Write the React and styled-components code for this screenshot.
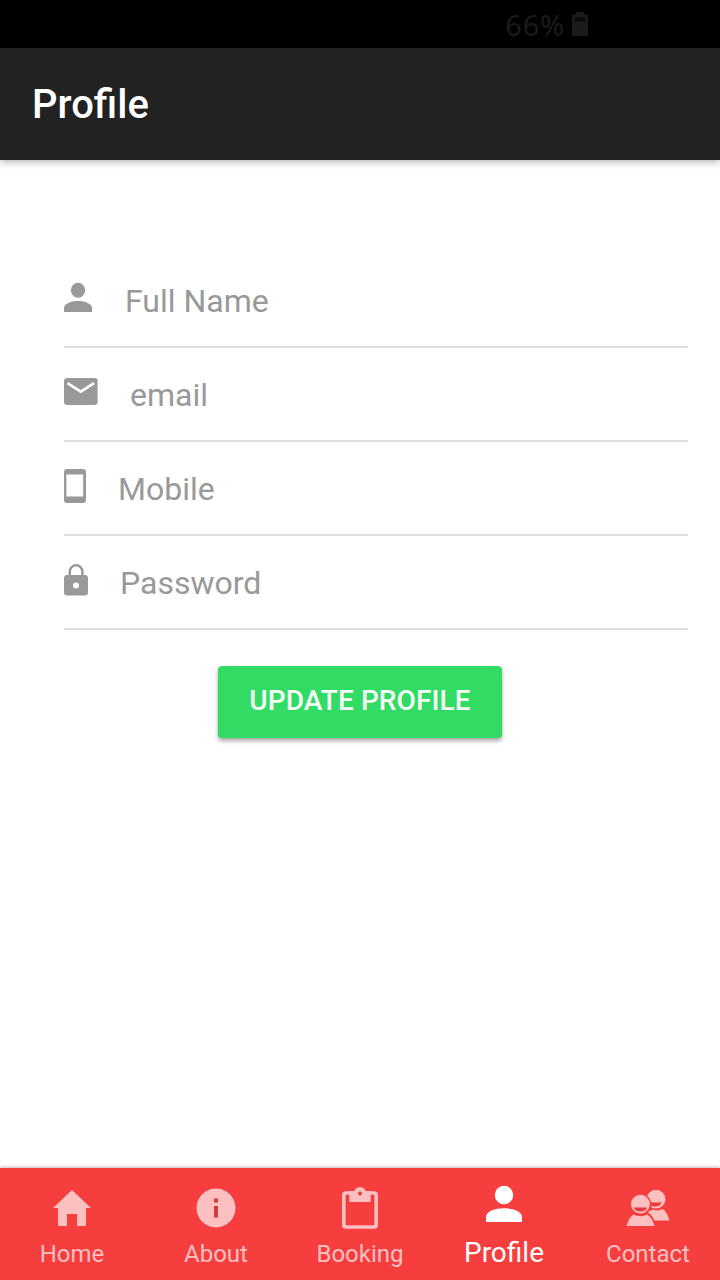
import React from 'react';
import styled, { createGlobalStyle } from 'styled-components'


const PersonIcon = ({ width, height }) => (
    <Svg width={width} height={height} viewBox="0 0 36 36" preserveAspectRatio="none">
        <circle cx="18" cy="9" r="9.2" />
        <path d="M0 36v-5C0 25.500 9 22.200 18 22.200s18 3.300 18 8.800v5z" />
    </Svg>
)

const MailIcon = () => (
    <Svg width="34" height="27" viewBox="0 0 34 27">
        <rect width="33.6" height="27" rx="3" />
        <path d="M3.5 5.2L16.8 13.6 30 5.2" fill="none" stroke="#fff" strokeWidth="2.6" />
    </Svg>
)

const PhoneIcon = () => (
    <Svg width="22" height="34" viewBox="0 0 22 34">
        <path fillRule="evenodd" d="M3 0h16a3 3 0 0 1 3 3v28a3 3 0 0 1-3 3H3a3 3 0 0 1-3-3V3a3 3 0 0 1 3-3zM2.4 5.6v22h16.8v-22z" />
    </Svg>
)

const LockIcon = () => (
    <Svg width="24" height="32" viewBox="0 0 24 32">
        <path d="M5.8 12V7.5a6.3 6.3 0 0 1 12.6 0V12" fill="none" stroke="currentColor" strokeWidth="2.4" />
        <path fillRule="evenodd" d="M3 11h18a3 3 0 0 1 3 3v14.4a3 3 0 0 1-3 3H3a3 3 0 0 1-3-3V14a3 3 0 0 1 3-3zm9 7.4a3 3 0 1 0 0 6 3 3 0 0 0 0-6z" />
    </Svg>
)

const HomeIcon = () => (
    <Svg width="38" height="36" viewBox="0 0 38 36">
        <path d="M19 0l19 18h-5v18h-9V24H14v12H5V18H0z" />
    </Svg>
)

const InfoIcon = () => (
    <Svg width="40" height="40" viewBox="0 0 40 40">
        <circle cx="20" cy="20" r="19.5" />
        <path d="M18 10.500h4v4h-4zM18 18h4v11.500h-4z" fill="#d23c40" />
    </Svg>
)

const ClipboardIcon = () => (
    <Svg width="36" height="42" viewBox="0 0 36 42">
        <rect x="1.8" y="6" width="32.400" height="34" rx="2" fill="none" stroke="currentColor" strokeWidth="3.600" />
        <circle cx="18" cy="6" r="6" />
        <rect x="7.300" y="4.200" width="21.400" height="10.800" />
        <circle cx="18" cy="6.400" r="2" fill="#e8393b" />
    </Svg>
)

const PeopleIcon = () => (
    <Svg width="42" height="38" viewBox="0 0 42 38">
        <path d="M21 31.500V23l5-2.500c3 1.500 6.500 1.300 9.300-.5C39 22 41 26 42.500 31.500z" />
        <circle cx="29" cy="10.2" r="9.4" />
        <path d="M21 13.600h13.800c-1 2.600-3.600 4-6.800 4-3 0-5.500-1.400-7-4z" fill="#e8393b" />
        <circle cx="13.400" cy="15.200" r="10.800" fill="#f73e3e" />
        <path d="M10 23h9.500c5 1.500 7.700 6.500 9.500 14.500H10z" fill="#f73e3e" />
        <circle cx="13.400" cy="15.200" r="9.400" />
        <path d="M6.600 18.400h13.600c-1 2.600-3.600 4-6.800 4s-5.800-1.400-6.800-4z" fill="#e8393b" />
        <path d="M-.3 37c1.400-5 3.400-9.400 6.900-11.400 4 2.300 9.600 2.300 13.600 0C23.700 27.600 26 32 27.500 37z" />
    </Svg>
)


const fields = [
    { label: "Full Name", icon: <PersonIcon width="28" height="29" />, top: 29, gap: 33 },
    { label: "email", icon: <MailIcon />, top: 30, gap: 32 },
    { label: "Mobile", icon: <PhoneIcon />, top: 27, gap: 32 },
    { label: "Password", icon: <LockIcon />, top: 28, gap: 32 },
]

const tabs = [
    { label: "Home", icon: <HomeIcon /> },
    { label: "About", icon: <InfoIcon /> },
    { label: "Booking", icon: <ClipboardIcon /> },
    { label: "Profile", icon: <PersonIcon width="36" height="36" />, active: true },
    { label: "Contact", icon: <PeopleIcon /> },
]


class App extends React.Component {
    render() {
        return (
            <>
                <GlobalStyle />
                <Screen>
                    <StatusBar>
                        <span>66%</span>
                        <Battery width="16" height="24" viewBox="0 0 16 24">
                            <path d="M4 0h8v2.500h4V24H0V2.500h4z" />
                            <path d="M3 5.500h10v4H3z" fill="#0b0b0b" />
                        </Battery>
                    </StatusBar>
                    <Header>
                        <H1>Profile</H1>
                    </Header>
                    <Form>
                        {fields.map(field => (
                            <Field key={field.label}>
                                <FieldIcon $top={field.top}>{field.icon}</FieldIcon>
                                <Label $gap={field.gap}>{field.label}</Label>
                            </Field>
                        ))}
                        <Button type="button">Update Profile</Button>
                    </Form>
                    <TabBar>
                        {tabs.map(tab => (
                            <Tab key={tab.label} $active={tab.active}>
                                <TabIcon $active={tab.active}>{tab.icon}</TabIcon>
                                <TabLabel $active={tab.active}>{tab.label}</TabLabel>
                            </Tab>
                        ))}
                    </TabBar>
                </Screen>
            </>
        )
    }
}


export default App

const GlobalStyle = createGlobalStyle`
    * {
        box-sizing: border-box;
    }
    body {
        margin: 0;
        background-color: #fff;
        font-family: Roboto, "Liberation Sans", sans-serif;
    }
`

const Screen = styled.div`
    width: 720px;
    height: 1280px;
    display: flex;
    flex-direction: column;
    overflow: hidden;
`

const Svg = styled.svg`
    display: block;
    flex: none;
    fill: currentColor;
    overflow: visible;
`

const StatusBar = styled.div`
    height: 48px;
    flex: none;
    display: flex;
    align-items: center;
    justify-content: flex-end;
    gap: 7px;
    padding: 2px 132px 0 0;
    background-color: #000;
    color: #1b1b1b;
    font-family: "Noto Sans", sans-serif;
    font-size: 29px;
    letter-spacing: 0.8px;
    line-height: 40px;
`

const Battery = styled(Svg)`
    margin-bottom: 2px;
`

const Header = styled.header`
    height: 112px;
    flex: none;
    display: flex;
    align-items: center;
    padding: 2px 0 0 32px;
    background-color: #222;
    box-shadow: 0 2px 8px rgba(0, 0, 0, 0.3);
`

const H1 = styled.h1`
    margin: 0;
    color: #fff;
    font-size: 40px;
    font-weight: 500;
    line-height: 48px;
`

const Form = styled.form`
    flex: 1;
    display: flex;
    flex-direction: column;
    padding: 94px 32px 0 64px;
`

const Field = styled.div`
    height: 94px;
    display: flex;
    align-items: flex-start;
    border-bottom: 2px solid #dedede;
    color: #999;
`

const FieldIcon = styled.div`
    padding-top: ${props => props.$top}px;
`

const Label = styled.label`
    margin: 27px 0 0 ${props => props.$gap}px;
    font-size: 32px;
    line-height: 40px;
`

const Button = styled.button`
    width: 284px;
    height: 72px;
    margin: 36px 0 0 154px;
    padding: 0 0 3px;
    border: none;
    border-radius: 4px;
    background-color: #32db64;
    box-shadow: 0 3px 4px rgba(0, 0, 0, 0.35);
    color: #f4fff6;
    font-family: inherit;
    font-size: 28px;
    font-weight: 500;
    letter-spacing: 0.1px;
    text-transform: uppercase;
    white-space: nowrap;
`

const TabBar = styled.nav`
    height: 112px;
    flex: none;
    display: flex;
    background-color: #f73e3e;
    box-shadow: 0 -1px 3px rgba(120, 40, 60, 0.35);
`

const Tab = styled.div`
    flex: 1;
    display: flex;
    flex-direction: column;
    align-items: center;
    color: ${props => props.$active ? '#fff' : '#fcc0c1'};
`

const TabIcon = styled.div`
    height: ${props => props.$active ? 36 : 44}px;
    margin-top: 18px;
    display: flex;
    align-items: center;
`

const TabLabel = styled.span`
    margin-top: ${props => props.$active ? 15 : 8}px;
    font-size: ${props => props.$active ? 28 : 24}px;
    line-height: 32px;
`
